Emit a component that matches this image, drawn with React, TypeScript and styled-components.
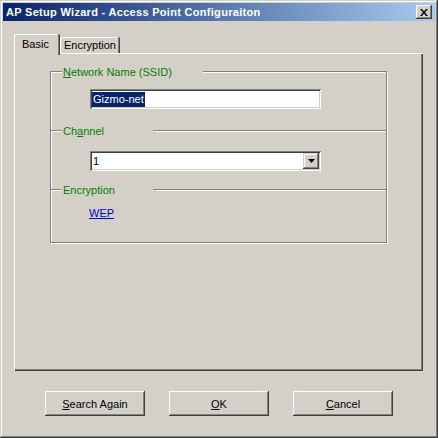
import React from 'react';
import styled, { createGlobalStyle } from 'styled-components';

const GlobalStyle = createGlobalStyle`
  html, body {
    margin: 0;
    padding: 0;
    background: #d4d0c8;
  }
  body {
    font-family: 'Liberation Sans', Arial, sans-serif;
    font-size: 11px;
    color: #000;
  }
  * {
    box-sizing: border-box;
  }
`;

const Window = styled.div`
  width: 438px;
  height: 438px;
  padding: 3px;
  background: #d4d0c8;
  display: flex;
  flex-direction: column;
  box-shadow:
    inset -1px -1px 0 #404040,
    inset 1px 1px 0 #d4d0c8,
    inset -2px -2px 0 #808080,
    inset 2px 2px 0 #fff;
`;

const TitleBar = styled.div`
  height: 18px;
  display: flex;
  align-items: center;
  justify-content: space-between;
  padding: 0 3px 0 3px;
  background: linear-gradient(to right, #0a246a, #a6caf0);
`;

const TitleText = styled.span`
  color: #fff;
  font-weight: bold;
  font-size: 11px;
  letter-spacing: 0.3px;
  white-space: nowrap;
`;

const CloseButton = styled.div`
  width: 16px;
  height: 14px;
  display: flex;
  align-items: center;
  justify-content: center;
  background: #d4d0c8;
  box-shadow:
    inset -1px -1px 0 #404040,
    inset 1px 1px 0 #fff,
    inset -2px -2px 0 #808080;
`;

const Body = styled.div`
  flex: 1;
  padding: 13px 0 0 11px;
`;

const TabStrip = styled.div`
  display: flex;
  align-items: flex-end;
`;

const Tab = styled.div<{ $active?: boolean; $width: number }>`
  position: relative;
  z-index: ${p => (p.$active ? 1 : 0)};
  width: ${p => p.$width}px;
  height: ${p => (p.$active ? 21 : 16)}px;
  margin-bottom: ${p => (p.$active ? -2 : 0)}px;
  padding: ${p => (p.$active ? '3px 0 0 8px' : '1px 0 0 4px')};
  line-height: 14px;
  background: #d4d0c8;
  border-top-left-radius: 2px;
  border-top-right-radius: 2px;
  box-shadow:
    inset -1px 0 0 #404040,
    inset 1px 1px 0 #fff,
    inset -2px 0 0 #808080;
  white-space: nowrap;
`;

const Panel = styled.div`
  width: 409px;
  height: 318px;
  padding: 18px 0 0 36px;
  background: #d4d0c8;
  box-shadow:
    inset 1px 1px 0 #fff,
    inset -1px -1px 0 #404040,
    inset -2px -2px 0 #808080;
`;

const GroupFrame = styled.div`
  width: 337px;
  height: 172px;
  border: 1px solid #808080;
  box-shadow: inset 1px 1px 0 #fff, 1px 1px 0 #fff;
  display: flex;
  flex-direction: column;
  align-items: flex-start;
`;

const HeaderRow = styled.div<{ $top: number }>`
  align-self: stretch;
  height: 14px;
  margin-top: ${p => p.$top}px;
  display: flex;
  align-items: center;
`;

const Etch = styled.div<{ $width?: number }>`
  height: 2px;
  border-top: 1px solid #808080;
  border-bottom: 1px solid #fff;
  ${p => (p.$width ? `width: ${p.$width}px;` : 'flex: 1;')}
`;

const GroupLabel = styled.div<{ $width: number }>`
  width: ${p => p.$width}px;
  height: 14px;
  line-height: 14px;
  padding-left: 1px;
  background: #d4d0c8;
  color: #008000;
  white-space: nowrap;
`;

const Sunken = styled.div<{ $top: number }>`
  width: 231px;
  height: 20px;
  margin: ${p => p.$top}px 0 0 39px;
  padding: 2px;
  background: #fff;
  display: flex;
  align-items: center;
  box-shadow:
    inset 1px 1px 0 #808080,
    inset -1px -1px 0 #fff,
    inset 2px 2px 0 #404040,
    inset -2px -2px 0 #d4d0c8;
`;

const Selected = styled.span`
  padding: 0 1px;
  line-height: 15px;
  background: #0a246a;
  color: #fff;
`;

const ComboValue = styled.span`
  flex: 1;
  padding-left: 1px;
  line-height: 14px;
`;

const DropButton = styled.div`
  width: 16px;
  height: 16px;
  display: flex;
  align-items: center;
  justify-content: center;
  background: #d4d0c8;
  box-shadow:
    inset -1px -1px 0 #404040,
    inset 1px 1px 0 #d4d0c8,
    inset -2px -2px 0 #808080,
    inset 2px 2px 0 #fff;
`;

const Link = styled.a`
  margin: 9px 0 0 38px;
  line-height: 14px;
  color: #0000cc;
  text-decoration: underline;
  cursor: pointer;
`;

const ButtonRow = styled.div`
  display: flex;
  gap: 24px;
  margin-top: 20px;
  padding-left: 31px;
`;

const Button = styled.button`
  width: 100px;
  height: 25px;
  padding: 0;
  border: none;
  background: #d4d0c8;
  font-family: inherit;
  font-size: 11px;
  color: #000;
  box-shadow:
    inset -1px -1px 0 #404040,
    inset 1px 1px 0 #fff,
    inset -2px -2px 0 #808080;
`;

const CloseIcon = () => (
  <svg width="8" height="7" viewBox="0 0 8 7">
    <path d="M0 0h2l2 2.5L6 0h2L5 3.5 8 7H6L4 4.5 2 7H0l3-3.5z" fill="#000" />
  </svg>
);

const DownArrow = () => (
  <svg width="7" height="4" viewBox="0 0 7 4">
    <path d="M0 0h7L3.5 4z" fill="#000" />
  </svg>
);

export default function App() {
  return (
    <>
      <GlobalStyle />
      <Window>
        <TitleBar>
          <TitleText>AP Setup Wizard - Access Point Configuraiton</TitleText>
          <CloseButton>
            <CloseIcon />
          </CloseButton>
        </TitleBar>
        <Body>
          <TabStrip>
            <Tab $active $width={46}>Basic</Tab>
            <Tab $width={60}>Encryption</Tab>
          </TabStrip>
          <Panel>
            <GroupFrame>
              <HeaderRow $top={-7}>
                <Etch $width={11} />
                <GroupLabel $width={141}>
                  <u>N</u>etwork Name (SSID)
                </GroupLabel>
                <Etch />
              </HeaderRow>
              <Sunken $top={10}>
                <Selected>Gizmo-net</Selected>
              </Sunken>

              <HeaderRow $top={15}>
                <Etch $width={11} />
                <GroupLabel $width={91}>
                  Ch<u>a</u>nnel
                </GroupLabel>
                <Etch />
              </HeaderRow>
              <Sunken $top={13}>
                <ComboValue>1</ComboValue>
                <DropButton>
                  <DownArrow />
                </DropButton>
              </Sunken>

              <HeaderRow $top={12}>
                <Etch $width={11} />
                <GroupLabel $width={91}>Encryption</GroupLabel>
                <Etch />
              </HeaderRow>
              <Link>WEP</Link>
            </GroupFrame>
          </Panel>
          <ButtonRow>
            <Button><u>S</u>earch Again</Button>
            <Button><u>O</u>K</Button>
            <Button><u>C</u>ancel</Button>
          </ButtonRow>
        </Body>
      </Window>
    </>
  );
}
